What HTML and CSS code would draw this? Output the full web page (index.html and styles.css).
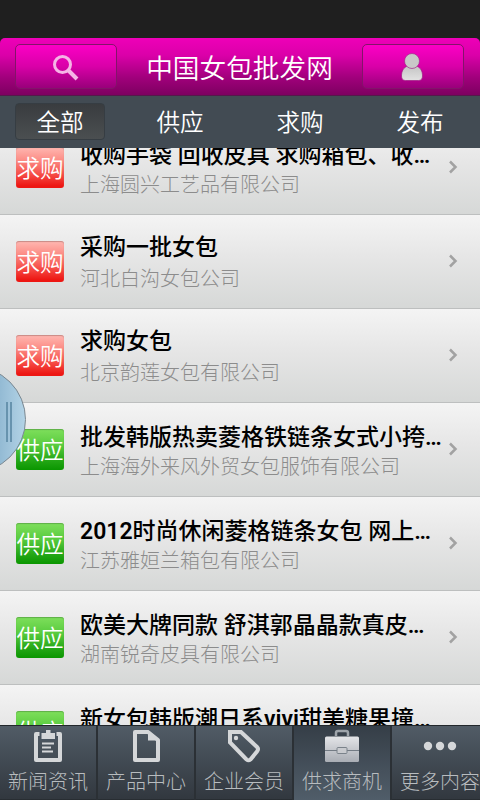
FILE: index.html
```html
<!DOCTYPE html>
<html lang="zh-CN">
<head>
<meta charset="utf-8">
<title>中国女包批发网</title>
<link rel="stylesheet" href="styles.css">
</head>
<body>
<div class="app">
  <div class="status"></div>
  <header class="header">
    <div class="hbtn search"><svg width="30" height="30" viewBox="0 0 30 30" fill="none" stroke="#f5b4e6"><circle cx="12.500" cy="12.500" r="8" stroke-width="3"/><path d="M18.500 18.500L27 27" stroke-width="4"/></svg></div>
    <h1>中国女包批发网</h1>
    <div class="hbtn"><svg width="26" height="30" viewBox="0 0 26 30"><defs><linearGradient id="u" x1="0" y1="0" x2="0" y2="1"><stop offset="0" stop-color="#c4c4c4"/><stop offset="1" stop-color="#e2e2e2"/></linearGradient></defs><path d="M1.500 24c0-5 2-8.500 6-10h9c4 1.500 6 5 6 10 0 3-1.500 4.500-4 4.500H5.500c-2.500 0-4-1.500-4-4.500z" fill="url(#u)" stroke="#a01882" stroke-width=".7"/><circle cx="12" cy="9" r="7.500" fill="#c9c7c8" stroke="#a3268b" stroke-width=".7"/></svg></div>
  </header>
  <nav class="filters"><div class="filter on"><span>全部</span></div><div class="filter"><span>供应</span></div><div class="filter"><span>求购</span></div><div class="filter"><span>发布</span></div></nav>
  <main class="list">
    <div class="row"><div class="badge buy">求购</div><div class="text"><div class="title cut">收购手袋 回收皮具 求购箱包、收<b>…</b></div><div class="sub">上海圆兴工艺品有限公司</div></div><svg class="chev" viewBox="0 0 10 14"><path d="M2 1.500L7.500 7 2 12.500"/></svg></div>
    <div class="row"><div class="badge buy">求购</div><div class="text"><div class="title">采购一批女包</div><div class="sub">河北白沟女包公司</div></div><svg class="chev" viewBox="0 0 10 14"><path d="M2 1.500L7.500 7 2 12.500"/></svg></div>
    <div class="row"><div class="badge buy">求购</div><div class="text"><div class="title">求购女包</div><div class="sub">北京韵莲女包有限公司</div></div><svg class="chev" viewBox="0 0 10 14"><path d="M2 1.500L7.500 7 2 12.500"/></svg></div>
    <div class="row"><div class="badge sell">供应</div><div class="text"><div class="title cut">批发韩版热卖菱格铁链条女式小挎<b>…</b></div><div class="sub">上海海外来风外贸女包服饰有限公司</div></div><svg class="chev" viewBox="0 0 10 14"><path d="M2 1.500L7.500 7 2 12.500"/></svg></div>
    <div class="row"><div class="badge sell">供应</div><div class="text"><div class="title cut"><b>2012</b>时尚休闲菱格链条女包 网上<b>…</b></div><div class="sub">江苏雅姮兰箱包有限公司</div></div><svg class="chev" viewBox="0 0 10 14"><path d="M2 1.500L7.500 7 2 12.500"/></svg></div>
    <div class="row"><div class="badge sell">供应</div><div class="text"><div class="title cut">欧美大牌同款 舒淇郭晶晶款真皮<b>…</b></div><div class="sub">湖南锐奇皮具有限公司</div></div><svg class="chev" viewBox="0 0 10 14"><path d="M2 1.500L7.500 7 2 12.500"/></svg></div>
    <div class="row"><div class="badge sell">供应</div><div class="text"><div class="title cut">新女包韩版潮日系<b>vivi</b>甜美糖果撞<b>…</b></div></div></div>
  </main>
  <nav class="tabs">
    <div class="tab"><svg viewBox="0 0 40 36"><path d="M8 5h24v26H8z" fill="none" stroke="#d5d7d9" stroke-width="4" stroke-linejoin="round"/><path d="M11.500 2h17v10h-17z" fill="#4a5560"/><path d="M13.500 4H18V1h4.500v3H27v6H13.500z" fill="#d5d7d9"/><path d="M14 14.500h12M14 18.500h9M14 22.500h11" stroke="#d5d7d9" stroke-width="2" fill="none"/></svg><span>新闻资讯</span></div>
    <div class="tab"><svg viewBox="0 0 40 36"><path d="M9 3h13l10 8v20H9z" fill="none" stroke="#d5d7d9" stroke-width="4" stroke-linejoin="round"/><path d="M22 1l12 10.500H22z" fill="#d5d7d9"/></svg><span>产品中心</span></div>
    <div class="tab"><svg viewBox="0 0 40 36"><path d="M6 3h11L33 18q2 2 0 4.500L26.500 30.500q-2 1.500-4 0L6 13.500z" fill="none" stroke="#d5d7d9" stroke-width="4"/><circle cx="12" cy="9" r="2.200" fill="#d5d7d9"/></svg><span>企业会员</span></div>
    <div class="tab active"><svg viewBox="0 0 40 36"><defs><linearGradient id="c" x1="0" y1="0" x2="0" y2="1"><stop offset="0" stop-color="#e4e5e8"/><stop offset="1" stop-color="#a9adb4"/></linearGradient></defs><path d="M14 7V4q0-2 2-2h8q2 0 2 2v3" fill="none" stroke="#9ea4aa" stroke-width="2.500"/><rect x="3" y="7.500" width="34" height="25.500" rx="1.500" fill="url(#c)"/><path d="M3 21.500h34" stroke="#737b84"/><rect x="15" y="18.500" width="10" height="6" rx="1" fill="#c9cbcf" stroke="#7a828a"/></svg><span>供求商机</span></div>
    <div class="tab"><svg viewBox="0 0 40 36" fill="#d5d7d9"><circle cx="8" cy="17" r="4.200"/><circle cx="20" cy="17" r="4.200"/><circle cx="32" cy="17" r="4.200"/></svg><span>更多内容</span></div>
  </nav>
  <div class="handle"><i></i><i></i></div>
</div>
</body>
</html>
```

FILE: styles.css
```css
* { box-sizing: border-box; }
body { margin: 0; font-family: "Noto Sans CJK SC", sans-serif; background: #1f1f1f; }
.app { position: relative; width: 480px; height: 800px; overflow: hidden; display: flex; flex-direction: column; }
.status { height: 38px; flex: none; background: #1f1f1f; }
.header { height: 58px; flex: none; display: flex; justify-content: space-between; padding: 6px 16px 0 15px; border-radius: 5px 5px 0 0; border-bottom: 1px solid #55184b; background: linear-gradient(#ee00b8, #db00a9 30%, #a0007b 70%, #7d0060); }
.header h1 { margin: 0; font-weight: 350; font-size: 26.67px; line-height: 46px; color: #fff; white-space: nowrap; }
.hbtn { width: 102px; height: 45px; padding-top: 1px; border: 1px solid #83146a; border-radius: 5px; background: linear-gradient(#fb00c5, #d900a8 50%, #99007a); display: flex; align-items: center; justify-content: center; }
.hbtn.search { padding-right: 2px; }
.filters { height: 52px; flex: none; display: flex; background: #424b53; }
.filter { width: 120px; padding: 7px 15px 0; color: #fff; font-size: 23.6px; font-weight: 350; line-height: 35px; text-align: center; }
.filter span { display: block; height: 37px; border: 1px solid transparent; border-radius: 4px; }
.filter.on span { background: linear-gradient(#393c3f, #4b4f51); border-color: #363d43; }
.list { flex: none; height: 577px; overflow: hidden; }
.row { height: 94px; display: flex; padding-left: 16px; border-bottom: 1px solid #bdbfbf; background: linear-gradient(#f4f4f4, #e6e6e6 45%, #d6d8d7); }
.row:first-child { margin-top: -27px; }
.badge { flex: none; width: 48px; height: 41px; margin: 26px 16px 0 0; border-radius: 3px; color: #fff; font-size: 23.6px; font-weight: 350; line-height: 41px; text-align: center; white-space: nowrap; }
.buy { background: linear-gradient(#ffb8b2, #fc9089 30%, #f6504a 65%, #ed1713 95%); box-shadow: inset 0 1px 1px #c98a86; }
.sell { background: linear-gradient(#7fdf5c, #58cb3e 40%, #26a818 75%, #0a9600); box-shadow: inset 0 1px 1px #5fae48; }
.text { width: 368px; white-space: nowrap; }
.title { height: 48px; padding-top: 16px; font-size: 23px; line-height: 34px; color: #000; font-weight: 500; }
.title.cut { padding-top: 18px; }
.title, .title b { font-family: Roboto, "Noto Sans CJK SC", sans-serif; }
.title b { font-weight: 600; }
.sub { font-size: 20px; line-height: 30px; color: #8c8c8c; font-weight: 300; }
.chev { width: 10px; height: 14px; margin-top: 39px; fill: none; stroke: #a2a2a2; stroke-width: 2.5; }
.tabs { flex: none; width: 490px; height: 75px; display: flex; border-top: 1px solid #22272b; background: linear-gradient(#515c66, #424b54 45%, #32383f 98%, #23282c); }
.tab { width: 98px; height: 74px; border-right: 2px solid #2b3035; display: flex; flex-direction: column; align-items: center; }
.tab svg { width: 40px; height: 36px; margin-top: 3px; }
.tab span { font-size: 20px; line-height: 28px; font-weight: 300; color: #b8bcbf; margin-top: 2px; white-space: nowrap; }
.tab.active { background: linear-gradient(#353e47, #46515c 60%, #505d69); }
.handle { position: absolute; left: -81px; top: 366px; width: 107px; height: 107px; border-radius: 50%; border: 1px solid #7a8790; background: linear-gradient(90deg, #8bb4cf 70%, #b3d3e6); display: flex; justify-content: flex-end; gap: 2px; padding: 35px 13px 0 0; }
.handle i { width: 2px; height: 40px; background: #6793ae; }
```
